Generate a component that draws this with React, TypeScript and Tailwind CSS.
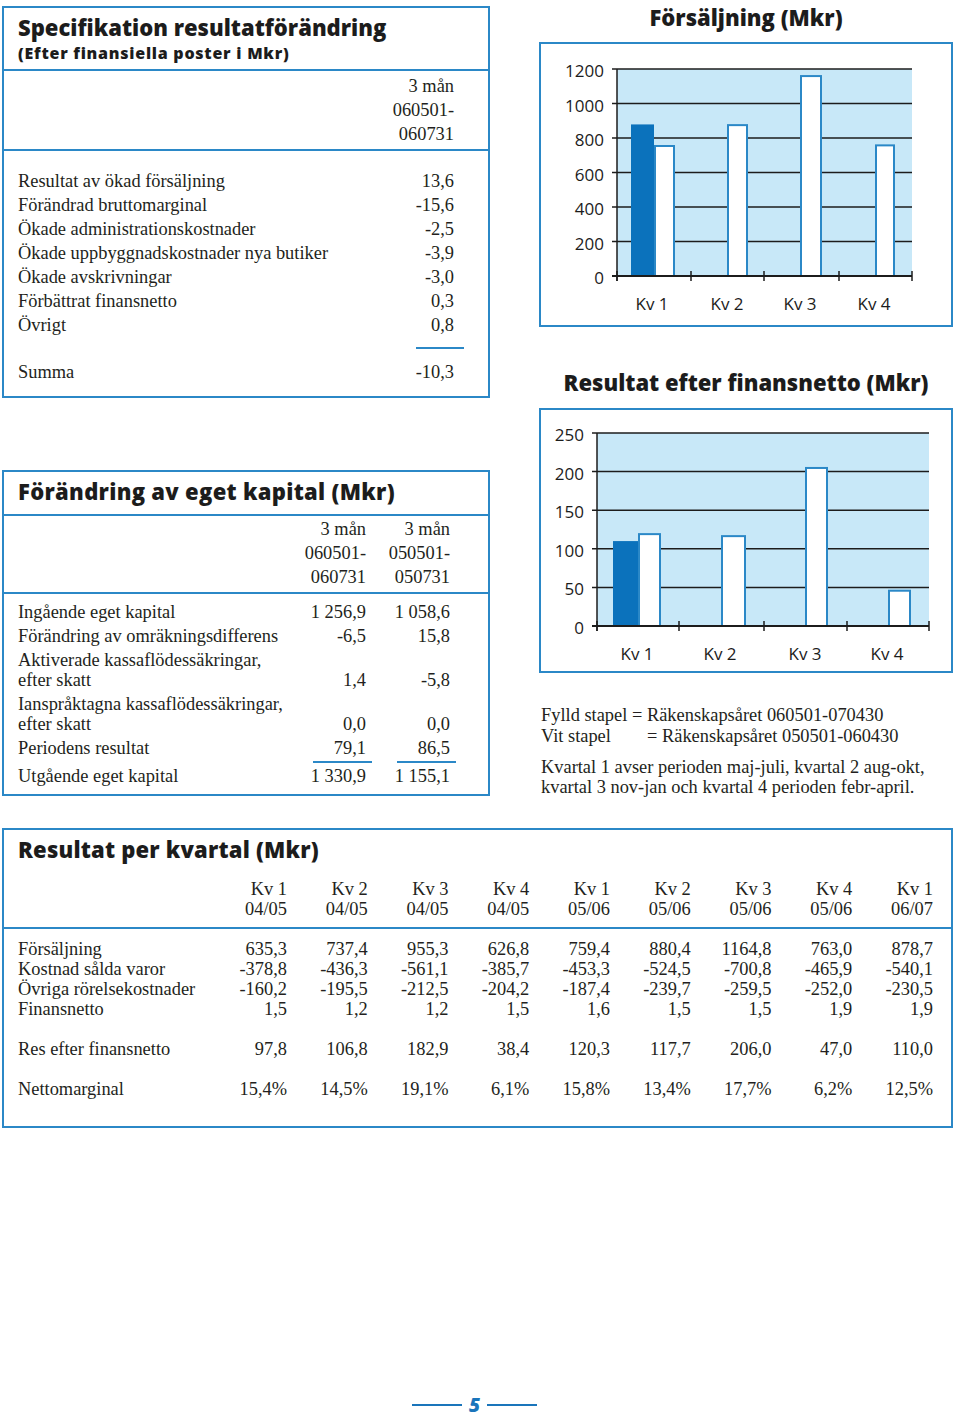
import React from 'react';

const BLUE = '#2b88c7';

type Bar = { x: number; w: number; v: number };

type ChartProps = {
  vb: [number, number, number, number];
  x0: number;
  x1: number;
  yTop: number;
  yBot: number;
  max: number;
  step: number;
  labelX: number;
  xTicks: number[];
  filled: Bar;
  white: Bar[];
  xLabels: { x: number; t: string }[];
  xLabelY: number;
};

function Chart(p: ChartProps) {
  const y = (v: number) => p.yBot - (v / p.max) * (p.yBot - p.yTop);
  const ticks: number[] = [];
  for (let v = 0; v <= p.max; v += p.step) ticks.push(v);
  const ink = '#1c1c1c';
  return (
    <svg viewBox={p.vb.join(' ')} width={p.vb[2]} height={p.vb[3]} className="block">
      <rect x={p.x0} y={p.yTop} width={p.x1 - p.x0} height={p.yBot - p.yTop} fill="#c8e8f8" />
      {ticks.map((v) => (
        <line key={v} x1={p.x0 - 5} x2={p.x1} y1={y(v)} y2={y(v)} stroke={ink} strokeWidth={1.5} />
      ))}
      <rect x={p.filled.x} y={y(p.filled.v)} width={p.filled.w} height={p.yBot - y(p.filled.v)} fill="#0b72bc" />
      {p.white.map((b, i) => (
        <rect
          key={i}
          x={b.x + 1}
          y={y(b.v) + 1}
          width={b.w - 2}
          height={p.yBot - y(b.v) - 1}
          fill="#ffffff"
          stroke={BLUE}
          strokeWidth={2}
        />
      ))}
      <line x1={p.x0} x2={p.x0} y1={p.yTop} y2={p.yBot + 5} stroke={ink} strokeWidth={1.5} />
      <line x1={p.x0 - 5} x2={p.x1} y1={p.yBot} y2={p.yBot} stroke={ink} strokeWidth={1.8} />
      {p.xTicks.map((x) => (
        <line key={x} x1={x} x2={x} y1={p.yBot - 5} y2={p.yBot + 5} stroke={ink} strokeWidth={1.5} />
      ))}
      {ticks.map((v) => (
        <text
          key={'l' + v}
          x={p.labelX}
          y={y(v) + 8}
          textAnchor="end"
          fontFamily="'Open Sans', sans-serif"
          fontSize={17}
          fill={ink}
        >
          {v}
        </text>
      ))}
      {p.xLabels.map((l) => (
        <text
          key={l.t}
          x={l.x}
          y={p.xLabelY}
          textAnchor="middle"
          fontFamily="'Open Sans', sans-serif"
          fontSize={17}
          fill={ink}
        >
          {l.t}
        </text>
      ))}
    </svg>
  );
}

const spec: [string, string][] = [
  ['Resultat av ökad försäljning', '13,6'],
  ['Förändrad bruttomarginal', '-15,6'],
  ['Ökade administrationskostnader', '-2,5'],
  ['Ökade uppbyggnadskostnader nya butiker', '-3,9'],
  ['Ökade avskrivningar', '-3,0'],
  ['Förbättrat finansnetto', '0,3'],
  ['Övrigt', '0,8'],
];

const equity: { label: string[]; v: [string, string] }[] = [
  { label: ['Ingående eget kapital'], v: ['1 256,9', '1 058,6'] },
  { label: ['Förändring av omräkningsdifferens'], v: ['-6,5', '15,8'] },
  { label: ['Aktiverade kassaflödessäkringar,', 'efter skatt'], v: ['1,4', '-5,8'] },
  { label: ['Ianspråktagna kassaflödessäkringar,', 'efter skatt'], v: ['0,0', '0,0'] },
  { label: ['Periodens resultat'], v: ['79,1', '86,5'] },
];

const qHead: [string, string][] = [
  ['Kv 1', '04/05'],
  ['Kv 2', '04/05'],
  ['Kv 3', '04/05'],
  ['Kv 4', '04/05'],
  ['Kv 1', '05/06'],
  ['Kv 2', '05/06'],
  ['Kv 3', '05/06'],
  ['Kv 4', '05/06'],
  ['Kv 1', '06/07'],
];

const qRows: { label: string; v: string[]; gap?: boolean }[] = [
  { label: 'Försäljning', v: ['635,3', '737,4', '955,3', '626,8', '759,4', '880,4', '1164,8', '763,0', '878,7'] },
  { label: 'Kostnad sålda varor', v: ['-378,8', '-436,3', '-561,1', '-385,7', '-453,3', '-524,5', '-700,8', '-465,9', '-540,1'] },
  { label: 'Övriga rörelsekostnader', v: ['-160,2', '-195,5', '-212,5', '-204,2', '-187,4', '-239,7', '-259,5', '-252,0', '-230,5'] },
  { label: 'Finansnetto', v: ['1,5', '1,2', '1,2', '1,5', '1,6', '1,5', '1,5', '1,9', '1,9'] },
  { label: 'Res efter finansnetto', v: ['97,8', '106,8', '182,9', '38,4', '120,3', '117,7', '206,0', '47,0', '110,0'], gap: true },
  { label: 'Nettomarginal', v: ['15,4%', '14,5%', '19,1%', '6,1%', '15,8%', '13,4%', '17,7%', '6,2%', '12,5%'], gap: true },
];

const heading = "font-['Open_Sans',sans-serif] font-extrabold text-[#1c1c1c] [font-variant-ligatures:none]";

export default function App() {
  return (
    <div className="w-[960px] h-[1418px] bg-white font-['Liberation_Serif',serif] text-[18.4px] text-[#231f20]">
      <div className="h-[828px] flex">
        {/* Left column */}
        <div className="ml-[2px] w-[488px] flex flex-col">
          {/* Specifikation */}
          <div className="mt-[6px] h-[392px] border-2 border-[#2b88c7] flex flex-col">
            <div className="h-[63px] border-b-2 border-[#2b88c7] pl-[14px] pt-[7px]">
              <div className={`${heading} text-[22px] leading-[24px]`}>Specifikation resultatförändring</div>
              <div className={`${heading} text-[16px] tracking-[0.75px] leading-[18px] mt-[5px]`}>
                (Efter finansiella poster i Mkr)
              </div>
            </div>
            <div className="h-[80px] border-b-2 border-[#2b88c7] pt-[3px] pr-[34px] text-right leading-[24px]">
              <div>3 mån</div>
              <div>060501-</div>
              <div>060731</div>
            </div>
            <div className="pt-[18px] pl-[14px] flex flex-col leading-[24px]">
              {spec.map(([l, v]) => (
                <div key={l} className="flex justify-between pr-[34px]">
                  <span>{l}</span>
                  <span>{v}</span>
                </div>
              ))}
              <div className="self-end mr-[24px] mt-[10px] w-[48px] h-[2px] bg-[#2b88c7]" />
              <div className="mt-[11px] flex justify-between pr-[34px]">
                <span>Summa</span>
                <span>-10,3</span>
              </div>
            </div>
          </div>

          {/* Förändring av eget kapital */}
          <div className="mt-[72px] h-[326px] border-2 border-[#2b88c7] flex flex-col">
            <div className="h-[44px] border-b-2 border-[#2b88c7] pl-[14px] pt-[7px]">
              <div className={`${heading} text-[22px] tracking-[0.3px] leading-[24px]`}>Förändring av eget kapital (Mkr)</div>
            </div>
            <div className="h-[78px] border-b-2 border-[#2b88c7] pt-[1px] pr-[32px] flex justify-end leading-[24px]">
              {[['3 mån', '060501-', '060731'], ['3 mån', '050501-', '050731']].map((c, i) => (
                <div key={i} className="w-[84px] pr-[6px] text-right">
                  {c.map((t) => (
                    <div key={t}>{t}</div>
                  ))}
                </div>
              ))}
            </div>
            <div className="pt-[6px] pl-[14px] pr-[32px] flex flex-col">
              {equity.map((r) => (
                <div
                  key={r.label[0]}
                  className={`flex items-end ${r.label.length > 1 ? 'py-[2px] leading-[20px]' : 'leading-[24px]'}`}
                >
                  <div className="flex-1">
                    {r.label.map((t) => (
                      <div key={t}>{t}</div>
                    ))}
                  </div>
                  <div className="w-[84px] pr-[6px] text-right">{r.v[0]}</div>
                  <div className="w-[84px] pr-[6px] text-right">{r.v[1]}</div>
                </div>
              ))}
              <div className="mt-[1px] flex justify-end gap-[25px]">
                <div className="w-[59px] h-[2px] bg-[#2b88c7]" />
                <div className="w-[59px] h-[2px] bg-[#2b88c7]" />
              </div>
              <div className="mt-[1px] flex leading-[24px]">
                <div className="flex-1">Utgående eget kapital</div>
                <div className="w-[84px] pr-[6px] text-right">1 330,9</div>
                <div className="w-[84px] pr-[6px] text-right">1 155,1</div>
              </div>
            </div>
          </div>
        </div>

        {/* Right column */}
        <div className="ml-[49px] w-[414px] flex flex-col">
          <div className="h-[42px] flex justify-center pt-[5px]">
            <div className={`${heading} text-[22px] leading-[24px]`}>Försäljning (Mkr)</div>
          </div>
          <div className="h-[285px] border-2 border-[#2b88c7]">
            <Chart
              vb={[541, 44, 410, 281]}
              x0={617}
              x1={912}
              yTop={69}
              yBot={276}
              max={1200}
              step={200}
              labelX={604}
              xTicks={[617, 691, 764, 839, 912]}
              filled={{ x: 631, w: 23, v: 878.7 }}
              white={[
                { x: 654, w: 21, v: 759.4 },
                { x: 727, w: 21, v: 880.4 },
                { x: 800, w: 22, v: 1164.8 },
                { x: 875, w: 20, v: 763.0 },
              ]}
              xLabels={[
                { x: 652, t: 'Kv 1' },
                { x: 727, t: 'Kv 2' },
                { x: 800, t: 'Kv 3' },
                { x: 874, t: 'Kv 4' },
              ]}
              xLabelY={310}
            />
          </div>
          <div className="h-[81px] flex items-end justify-center pb-[14px]">
            <div className={`${heading} text-[22px] leading-[24px]`}>Resultat efter finansnetto (Mkr)</div>
          </div>
          <div className="h-[265px] border-2 border-[#2b88c7]">
            <Chart
              vb={[541, 410, 410, 261]}
              x0={597}
              x1={929}
              yTop={433}
              yBot={626}
              max={250}
              step={50}
              labelX={584}
              xTicks={[597, 679, 764, 847, 929]}
              filled={{ x: 613, w: 25, v: 110.0 }}
              white={[
                { x: 638, w: 23, v: 120.3 },
                { x: 721, w: 25, v: 117.7 },
                { x: 805, w: 23, v: 206.0 },
                { x: 888, w: 23, v: 47.0 },
              ]}
              xLabels={[
                { x: 637, t: 'Kv 1' },
                { x: 720, t: 'Kv 2' },
                { x: 805, t: 'Kv 3' },
                { x: 887, t: 'Kv 4' },
              ]}
              xLabelY={660}
            />
          </div>
          <div className="mt-[32px] pl-[2px] leading-[21px]">
            <div>Fylld stapel = Räkenskapsåret 060501-070430</div>
            <div className="flex">
              <span className="w-[106px]">Vit stapel</span>
              <span>= Räkenskapsåret 050501-060430</span>
            </div>
          </div>
          <div className="mt-[10px] pl-[2px] leading-[20px]">
            <div>Kvartal 1 avser perioden maj-juli, kvartal 2 aug-okt,</div>
            <div>kvartal 3 nov-jan och kvartal 4 perioden febr-april.</div>
          </div>
        </div>
      </div>

      {/* Resultat per kvartal */}
      <div className="ml-[2px] w-[951px] h-[300px] border-2 border-[#2b88c7] flex flex-col">
        <div className="h-[99px] border-b-2 border-[#2b88c7] pt-[7px] pl-[14px] pr-[18px]">
          <div className={`${heading} text-[22px] tracking-[0.2px] leading-[24px]`}>Resultat per kvartal (Mkr)</div>
          <div className="mt-[18px] grid grid-cols-[1fr_repeat(9,80.75px)] leading-[20px]">
            <div />
            {qHead.map(([a, b], i) => (
              <div key={i} className="text-right">
                <div>{a}</div>
                <div>{b}</div>
              </div>
            ))}
          </div>
        </div>
        <div className="pt-[10px] pl-[14px] pr-[18px] leading-[20px]">
          {qRows.map((r) => (
            <div key={r.label} className={`grid grid-cols-[1fr_repeat(9,80.75px)] ${r.gap ? 'mt-[20px]' : ''}`}>
              <div>{r.label}</div>
              {r.v.map((v, i) => (
                <div key={i} className="text-right">
                  {v}
                </div>
              ))}
            </div>
          ))}
        </div>
      </div>

      {/* Page number */}
      <div className="mt-[267px] h-[20px] pl-[412px] flex items-center gap-[7px]">
        <div className="w-[50px] h-[2px] bg-[#1a75bb]" />
        <div className="font-['Open_Sans',sans-serif] font-extrabold italic text-[19px] leading-[20px] text-[#1a75bb]">5</div>
        <div className="w-[50px] h-[2px] bg-[#1a75bb]" />
      </div>
    </div>
  );
}
